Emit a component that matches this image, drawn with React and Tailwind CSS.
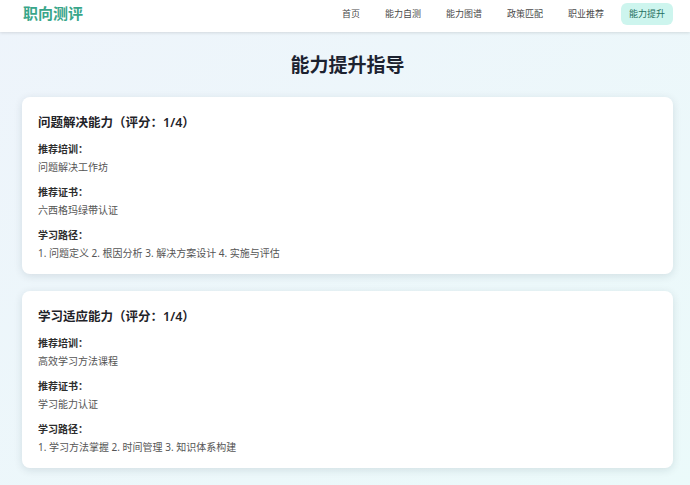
import React from 'react';

const navItems = ['首页', '能力自测', '能力图谱', '政策匹配', '职业推荐', '能力提升'];

const skills = [
  {
    name: '问题解决能力',
    score: '1/4',
    training: '问题解决工作坊',
    cert: '六西格玛绿带认证',
    path: '1. 问题定义 2. 根因分析 3. 解决方案设计 4. 实施与评估',
  },
  {
    name: '学习适应能力',
    score: '1/4',
    training: '高效学习方法课程',
    cert: '学习能力认证',
    path: '1. 学习方法掌握 2. 时间管理 3. 知识体系构建',
  },
];

const SkillCard = ({ skill }) => (
  <div className="bg-white rounded-lg shadow-[0_2px_8px_rgba(15,40,60,0.12)] pl-4 pr-4 pt-4 pb-[13px]">
    <h2 className="text-[12.5px] leading-5 font-semibold text-[#1f2328]">
      {skill.name}（评分：{skill.score}）
    </h2>
    <div className="mt-2">
      <div className="text-[10px] leading-4 font-bold text-[#2d2d2d]">推荐培训：</div>
      <div className="mt-[2px] text-[10px] leading-4 text-[#555]">{skill.training}</div>
    </div>
    <div className="mt-[9px]">
      <div className="text-[10px] leading-4 font-bold text-[#2d2d2d]">推荐证书：</div>
      <div className="mt-[2px] text-[10px] leading-4 text-[#555]">{skill.cert}</div>
    </div>
    <div className="mt-[9px]">
      <div className="text-[10px] leading-4 font-bold text-[#2d2d2d]">学习路径：</div>
      <div className="mt-[2px] text-[10px] leading-4 text-[#555]">{skill.path}</div>
    </div>
  </div>
);

const App = () => {
  return (
    <div
      className="min-h-screen bg-linear-to-br from-[#eef4fb] to-[#ebfafa]"
      style={{ fontFamily: '"Noto Sans", "Noto Sans CJK SC", sans-serif' }}
    >
      {/* header */}
      <header className="h-[32px] bg-white shadow-[0_1px_3px_rgba(0,0,0,0.12)]">
        <div className="h-full flex items-center justify-between pl-[23px] pr-[17px] pb-[5px]">
          <div className="text-[15px] font-bold text-[#38a68a]">职向测评</div>
          <nav className="flex items-center gap-[9px]">
            {navItems.map((item) => (
              <a
                key={item}
                className={
                  item === '能力提升'
                    ? 'px-2 py-[5px] rounded-md text-[9px] leading-3 bg-[#cdf5ee] text-[#1f6f60]'
                    : 'px-2 py-[5px] rounded-md text-[9px] leading-3 text-[#4a4a4a]'
                }
              >
                {item}
              </a>
            ))}
          </nav>
        </div>
      </header>

      <main className="pl-[22px] pr-[17px] pt-[19px] pb-8">
        <h1 className="text-center text-[19px] leading-7 font-bold text-[#1c2230] mb-[18px]">
          能力提升指导
        </h1>
        <div className="flex flex-col gap-[17px]">
          {skills.map((s) => (
            <SkillCard key={s.name} skill={s} />
          ))}
        </div>
      </main>
    </div>
  );
};

export default App;
